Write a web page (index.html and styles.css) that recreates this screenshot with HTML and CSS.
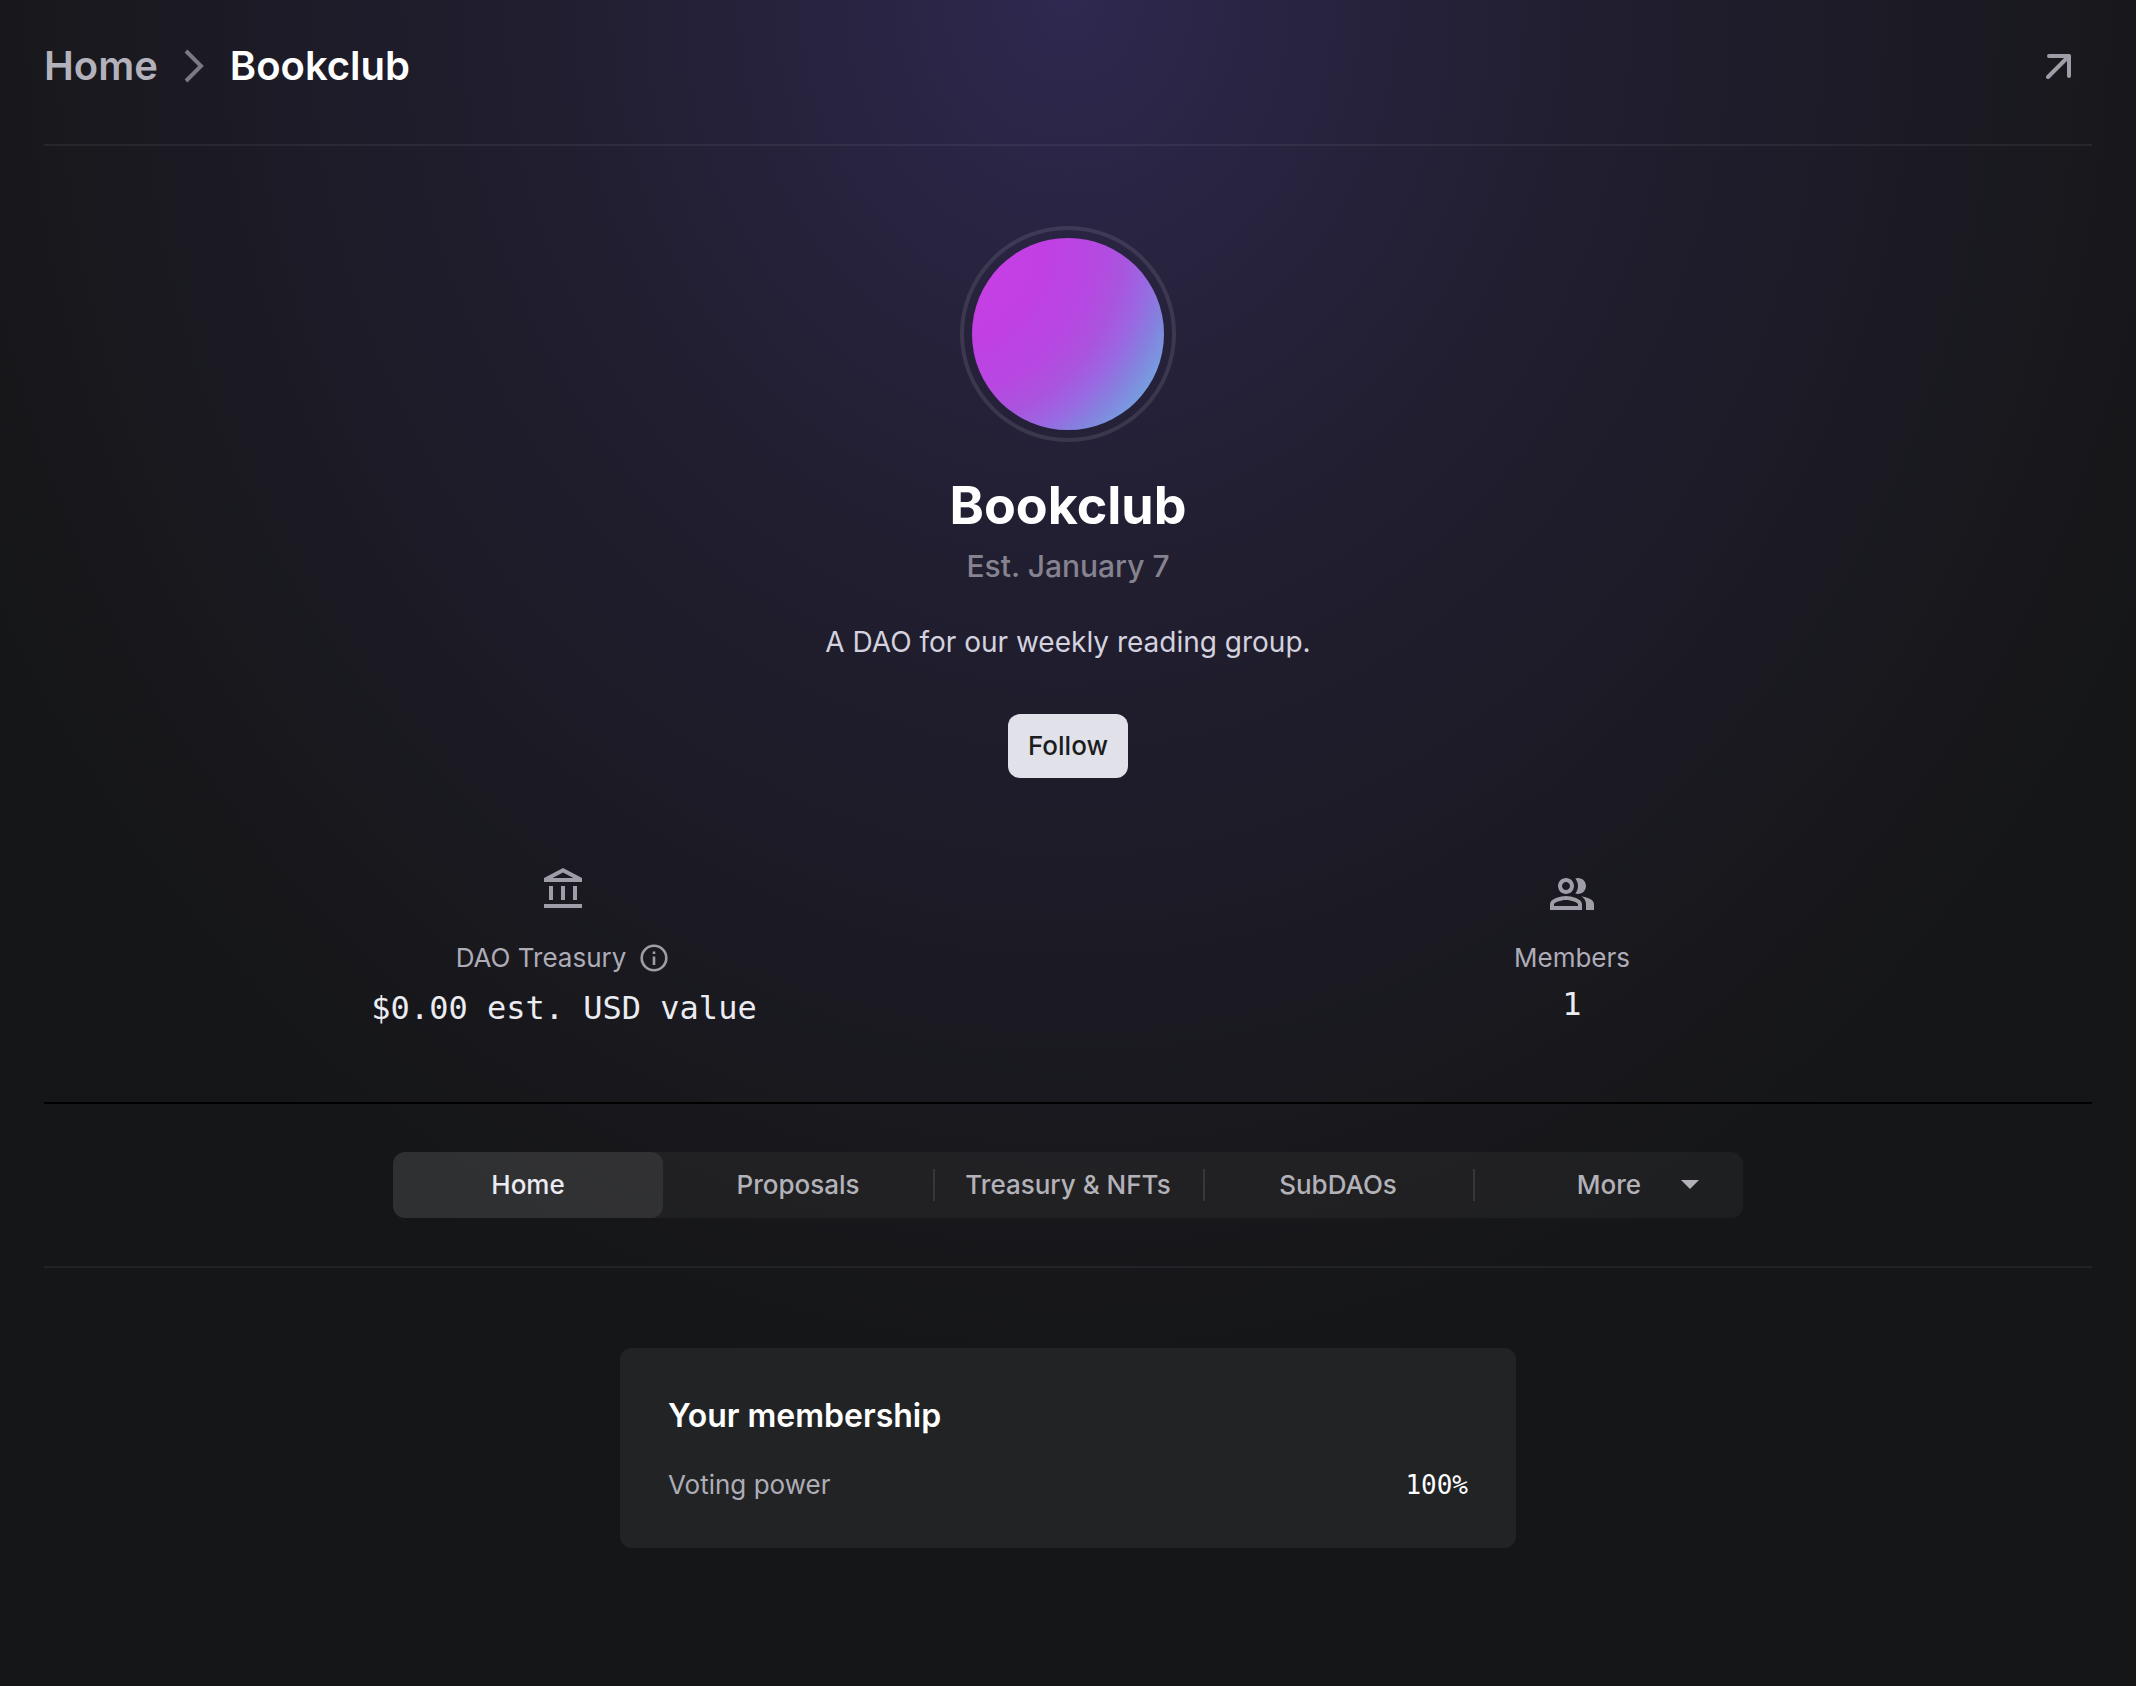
FILE: index.html
```html
<!DOCTYPE html>
<html lang="en">
<head>
<meta charset="utf-8">
<meta name="viewport" content="width=device-width, initial-scale=1">
<title>Bookclub</title>
<link rel="stylesheet" href="styles.css">
</head>
<body>
<div class="page">
  <header class="topbar">
    <nav class="crumbs" aria-label="Breadcrumb">
      <a class="crumb" href="#">Home</a>
      <svg class="crumb-sep" viewBox="0 0 20 34" aria-hidden="true"><path d="M2 2l15 15L2 32" fill="none" stroke="currentColor" stroke-width="4"/></svg>
      <span class="crumb crumb-current" aria-current="page">Bookclub</span>
    </nav>
    <a class="open-link" href="#" aria-label="Open">
      <svg viewBox="0 0 26 26" aria-hidden="true"><path d="M3 3h20v20M23 3L2 24" fill="none" stroke="currentColor" stroke-width="4" stroke-linecap="round" stroke-linejoin="round"/></svg>
    </a>
  </header>

  <main>
    <section class="hero">
      <div class="avatar"><div class="avatar-image"></div></div>
      <h1 class="name">Bookclub</h1>
      <p class="established">Est. January 7</p>
      <p class="description">A DAO for our weekly reading group.</p>
      <button class="follow" type="button">Follow</button>
    </section>

    <section class="stats">
      <div class="stat stat-treasury">
        <svg class="stat-icon" viewBox="0 0 24 24" aria-hidden="true"><path fill="currentColor" d="M6.500 10h-2v7h2v-7zm6 0h-2v7h2v-7zm8.500 9H2v2h19v-2zm-2.500-9h-2v7h2v-7zm-7-6.740L16.710 6H6.290l5.210-2.740m0-2.260L2 6v2h19V6l-9.500-5z"/></svg>
        <div class="stat-label">
          <span>DAO Treasury</span>
          <svg class="info" viewBox="0 0 28 28" aria-hidden="true"><circle cx="14" cy="14" r="12.300" fill="none" stroke="currentColor" stroke-width="2.600"/><path fill="currentColor" d="M12.700 7.500h2.600v2.600h-2.600zM12.700 12.500h2.600v8.500h-2.600z"/></svg>
        </div>
        <p class="stat-value">$0.00 est. USD value</p>
      </div>
      <div class="stat stat-members">
        <svg class="stat-icon" viewBox="0 0 24 24" aria-hidden="true"><path fill="currentColor" d="M16.670 13.130C18.040 14.060 19 15.320 19 17v3h4v-3c0-2.180-3.570-3.470-6.330-3.870zM15 12c2.210 0 4-1.790 4-4s-1.790-4-4-4c-.47 0-.91.1-1.330.24C14.500 5.270 15 6.580 15 8s-.5 2.730-1.330 3.760c.42.14.86.24 1.330.24zM9 12c2.210 0 4-1.790 4-4s-1.790-4-4-4-4 1.790-4 4 1.790 4 4 4zm0-6c1.100 0 2 .9 2 2s-.9 2-2 2-2-.9-2-2 .9-2 2-2zM9 13c-2.670 0-8 1.340-8 4v3h16v-3c0-2.660-5.330-4-8-4zm6 5H3v-.99C3.200 16.290 6.300 15 9 15s5.800 1.290 6 2v1z"/></svg>
        <div class="stat-label">Members</div>
        <p class="stat-value">1</p>
      </div>
    </section>

    <div class="tabbar">
      <nav class="tabs" aria-label="Sections">
        <a class="tab tab-active" href="#" aria-current="page">Home</a>
        <a class="tab" href="#">Proposals</a>
        <a class="tab tab-divided" href="#">Treasury &amp; NFTs</a>
        <a class="tab tab-divided" href="#">SubDAOs</a>
        <button class="tab tab-divided tab-more" type="button" aria-haspopup="menu">More
          <svg class="caret" viewBox="0 0 18 10" aria-hidden="true"><path d="M0 0h18L9 9z" fill="currentColor"/></svg>
        </button>
      </nav>
    </div>

    <section class="card">
      <h2 class="card-title">Your membership</h2>
      <dl class="card-row">
        <dt class="card-key">Voting power</dt>
        <dd class="card-value">100%</dd>
      </dl>
    </section>
  </main>
</div>
</body>
</html>
```
FILE: styles.css
```css
* {
  box-sizing: border-box;
  margin: 0;
}

body {
  min-height: 100vh;
  font-family: Inter, "Liberation Sans", sans-serif;
  color: #fff;
  background: #151618 radial-gradient(1240px 1400px at 50% 0, #2f2850 0%, #28233f 20%, #211e30 42%, #1c1b26 65%, #18181c 85%, #151618 100%) no-repeat;
}

a {
  color: inherit;
  text-decoration: none;
}

button {
  border: 0;
  font: inherit;
  cursor: pointer;
}

.page {
  padding: 0 44px 80px;
}

.topbar {
  display: flex;
  align-items: center;
  justify-content: space-between;
  padding: 44px 20px 56px 0;
  border-bottom: 2px solid rgba(255, 255, 255, 0.06);
}

.crumbs {
  display: flex;
  align-items: center;
  gap: 26px;
}

.crumb {
  font-size: 40px;
  font-weight: 600;
  line-height: 44px;
  color: #b3b2bc;
}

.crumb-current {
  color: #fff;
}

.crumb-sep {
  width: 20px;
  height: 34px;
  color: #7a7984;
}

.open-link {
  display: flex;
  color: #9f9ea8;
}

.open-link svg {
  width: 26px;
  height: 26px;
}

.hero {
  display: flex;
  flex-direction: column;
  align-items: center;
  padding-top: 80px;
}

.avatar {
  padding: 8px;
  border: 4px solid rgba(255, 255, 255, 0.1);
  border-radius: 50%;
}

.avatar-image {
  width: 192px;
  height: 192px;
  border-radius: 50%;
  background: radial-gradient(circle at -20% 0%, #c73fe4 20%, #c040e4 38%, #b748e2 54%, #a955de 64%, #9a68e2 72%, #8580de 79%, #779de0 87%);
}

.name {
  margin-top: 36px;
  font-size: 52px;
  font-weight: 700;
  line-height: 56px;
}

.established {
  margin-top: 14px;
  font-size: 30px;
  font-weight: 500;
  line-height: 36px;
  color: #85838f;
}

.description {
  margin-top: 38px;
  font-size: 28px;
  line-height: 40px;
  color: #d3d2de;
}

.follow {
  margin-top: 52px;
  padding: 14px 20px;
  border-radius: 12px;
  font-size: 26px;
  font-weight: 500;
  line-height: 36px;
  color: #1b1c1e;
  background: #e1e1e9;
}

.stats {
  display: grid;
  grid-template-columns: 1fr 1fr;
  align-items: center;
  padding: 88px 16px 74px;
}

.stat {
  display: flex;
  flex-direction: column;
  align-items: center;
}

.stat-treasury {
  row-gap: 12px;
}

.stat-members {
  row-gap: 8px;
}

.stat-icon {
  width: 48px;
  height: 48px;
  margin-bottom: 14px;
  color: #9f9ea8;
}

.stat-label {
  display: flex;
  align-items: center;
  gap: 14px;
  font-size: 26px;
  line-height: 36px;
  color: #aeadb7;
}

.info {
  width: 28px;
  height: 28px;
  margin-right: 4px;
  color: #9f9ea8;
}

.stat-value {
  font-family: "DejaVu Sans Mono", monospace;
  font-size: 32px;
  line-height: 40px;
  color: #ebebf2;
}

.tabbar {
  display: flex;
  justify-content: center;
  padding: 48px 0;
  border-top: 2px solid #000;
  border-bottom: 2px solid rgba(255, 255, 255, 0.06);
}

.tabs {
  display: grid;
  grid-template-columns: repeat(5, 1fr);
  width: 100%;
  max-width: 1350px;
  border-radius: 12px;
  background: rgba(255, 255, 255, 0.04);
}

.tab {
  display: flex;
  align-items: center;
  justify-content: center;
  padding: 15px 0;
  border-radius: 12px;
  font-size: 26px;
  font-weight: 500;
  line-height: 36px;
  color: #b3b2b9;
  background: none;
}

.tab-active {
  color: #ebebf2;
  background: rgba(255, 255, 255, 0.08);
}

.tab-divided {
  border-radius: 0;
  background: linear-gradient(#37373b, #37373b) left center / 2px 32px no-repeat;
}

.tab-more {
  gap: 40px;
  padding-left: 60px;
}

.caret {
  width: 18px;
  height: 10px;
}

.card {
  max-width: 896px;
  margin: 80px auto 0;
  padding: 48px 48px 46px;
  border-radius: 12px;
  background: #222325;
}

.card-title {
  font-size: 32px;
  font-weight: 600;
  line-height: 40px;
}

.card-row {
  display: flex;
  justify-content: space-between;
  margin-top: 32px;
  font-size: 26px;
  line-height: 34px;
}

.card-key {
  color: #aeadb7;
}

.card-value {
  font-family: "DejaVu Sans Mono", monospace;
  color: #fff;
}
```
